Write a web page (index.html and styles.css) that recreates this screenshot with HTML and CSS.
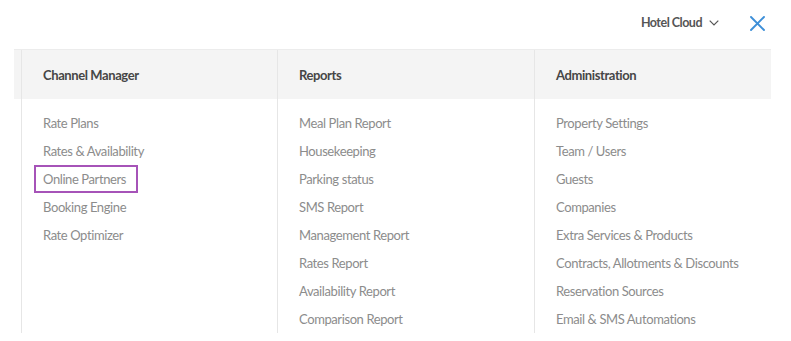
FILE: index.html
```html
<!DOCTYPE html>
<html>
<head>
<meta charset="utf-8">
<link rel="stylesheet" href="styles.css">
</head>
<body>
<header class="topbar">
  <button class="account">Hotel Cloud
    <svg class="chev" width="10" height="6" viewBox="0 0 10 6"><path d="M0.7 0.7L5 5 9.3 0.7" fill="none" stroke="#555" stroke-width="1.2"/></svg>
  </button>
  <button class="close" aria-label="Close">
    <svg width="15" height="15" viewBox="0 0 15 15"><path d="M1 1l13 13M14 1L1 14" stroke="#3d8fd8" stroke-width="1.9" stroke-linecap="round"/></svg>
  </button>
</header>
<nav class="menu">
  <div class="columns">
    <section class="col">
      <h3 class="col-head">Channel Manager</h3>
      <ul class="col-list">
        <li><a class="item">Rate Plans</a></li>
        <li><a class="item">Rates &amp; Availability</a></li>
        <li><a class="item active">Online Partners</a></li>
        <li><a class="item">Booking Engine</a></li>
        <li><a class="item">Rate Optimizer</a></li>
      </ul>
    </section>
    <section class="col">
      <h3 class="col-head">Reports</h3>
      <ul class="col-list">
        <li><a class="item">Meal Plan Report</a></li>
        <li><a class="item">Housekeeping</a></li>
        <li><a class="item">Parking status</a></li>
        <li><a class="item">SMS Report</a></li>
        <li><a class="item">Management Report</a></li>
        <li><a class="item">Rates Report</a></li>
        <li><a class="item">Availability Report</a></li>
        <li><a class="item">Comparison Report</a></li>
      </ul>
    </section>
    <section class="col col-last">
      <h3 class="col-head">Administration</h3>
      <ul class="col-list">
        <li><a class="item">Property Settings</a></li>
        <li><a class="item">Team / Users</a></li>
        <li><a class="item">Guests</a></li>
        <li><a class="item">Companies</a></li>
        <li><a class="item">Extra Services &amp; Products</a></li>
        <li><a class="item">Contracts, Allotments &amp; Discounts</a></li>
        <li><a class="item">Reservation Sources</a></li>
        <li><a class="item">Email &amp; SMS Automations</a></li>
      </ul>
    </section>
  </div>
</nav>
</body>
</html>
```
FILE: styles.css
```css
* { box-sizing: border-box; }
html, body { margin: 0; padding: 0; background: #fff; }
body {
  font-family: Lato, "Open Sans", "Liberation Sans", sans-serif;
  font-size: 13px;
  letter-spacing: -0.4px;
  color: #8c8c8c;
  width: 791px;
  height: 341px;
  overflow: hidden;
}
.topbar {
  height: 49px;
  display: flex;
  align-items: center;
  justify-content: flex-end;
  padding-right: 26px;
}
.account {
  border: 0;
  background: none;
  font: inherit;
  font-size: 12.5px;
  letter-spacing: -0.5px;
  font-weight: 700;
  color: #555;
  display: flex;
  align-items: center;
  gap: 7px;
  padding: 0;
  margin-right: 31px;
  margin-top: -4px;
}
.chev { margin-top: 1px; }
.close {
  border: 0;
  background: none;
  padding: 0;
  display: flex;
  margin-top: -2px;
}
.menu {
  margin-left: 14px;
  width: 757px;
  border-top: 1px solid #ececec;
  background: linear-gradient(#f4f4f4, #f4f4f4) top left / 100% 49px no-repeat;
}
.columns {
  display: flex;
  padding-left: 7px;
}
.col {
  width: 256px;
  border-left: 1px solid #e6e6e6;
  height: 283px;
}
.col + .col { width: 257px; }
.col-last { flex: 1; }
.col-head {
  margin: 0;
  height: 49px;
  display: flex;
  align-items: center;
  padding-left: 21px;
  font-size: 13px;
  font-weight: 700;
  color: #464646;
}
.col-list {
  list-style: none;
  margin: 0;
  padding: 10px 0 0 12px;
}
.col-list li { height: 28px; }
.item {
  display: inline-block;
  height: 28px;
  line-height: 24px;
  padding: 0 10px 0 7px;
  border: 2px solid transparent;
  color: #8c8c8c;
}
.item.active { border-color: #a653b8; }
```
